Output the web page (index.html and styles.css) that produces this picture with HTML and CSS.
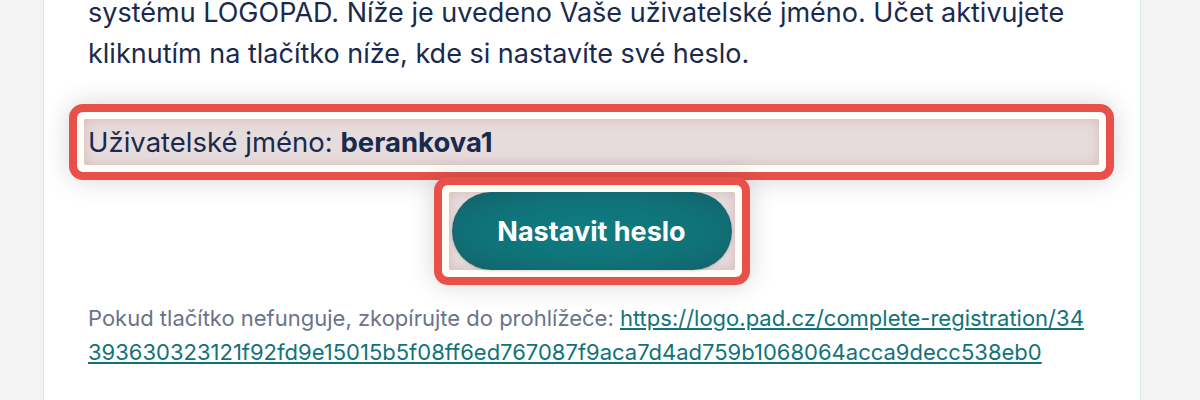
FILE: index.html
```html
<!DOCTYPE html>
<html lang="cs">
<head>
<meta charset="utf-8">
<title>LOGOPAD</title>
<link rel="stylesheet" href="styles.css">
</head>
<body>
<div class="card">
  <p class="intro">systému LOGOPAD. Níže je uvedeno Vaše uživatelské jméno. Účet aktivujete kliknutím na tlačítko níže, kde si nastavíte své heslo.</p>
  <div class="hl hl-user">
    <div class="hl-inner user">Uživatelské jméno: <strong>berankova1</strong></div>
  </div>
  <div class="btn-row">
    <div class="hl hl-btn">
      <div class="hl-inner btn-wrap"><a class="btn" href="#">Nastavit heslo</a></div>
    </div>
  </div>
  <p class="fallback">Pokud tlačítko nefunguje, zkopírujte do prohlížeče: <a class="link" href="#">https://logo.pad.cz/complete-registration/34393630323121f92fd9e15015b5f08ff6ed767087f9aca7d4ad759b1068064acca9decc538eb0</a></p>
</div>
</body>
</html>
```

FILE: styles.css
```css
html, body {
  margin: 0;
  padding: 0;
  background: #f3f3f3;
  font-family: Inter, "Noto Sans", sans-serif;
  height: 400px;
  overflow: hidden;
}

.card {
  margin-left: 43px;
  width: 1007px;
  background: #ffffff;
  border-left: 1px solid #d6e8e5;
  border-right: 1px solid #d6e8e5;
  padding: 0 45px 60px 44px;
  height: 400px;
}

.intro {
  margin: -8px 0 0 0;
  font-size: 27px;
  line-height: 41px;
  color: #1a2a4e;
}

.hl {
  border: 8px solid #e9504a;
  border-radius: 14px;
  background: #fffdf7;
  padding: 7px;
  box-shadow: 0 0 26px rgba(0, 0, 0, 0.17);
}

.hl-inner {
  background: #e6dcdc;
  border-radius: 2px;
  box-shadow: inset 0 0 12px rgba(190, 120, 120, 0.35);
}

.hl-user {
  margin: 30px -19px 0 -19px;
}

.user {
  height: 46px;
  line-height: 46px;
  padding-left: 4px;
  font-size: 27.5px;
  color: #1a2a4e;
}

.user strong {
  font-weight: 700;
}

.btn-row {
  display: flex;
  justify-content: center;
  margin-top: -3px;
  position: relative;
}

.btn-wrap {
  padding: 0 3px;
  display: flex;
}

.btn {
  display: flex;
  align-items: center;
  justify-content: center;
  width: 280px;
  height: 78px;
  border-radius: 39px;
  background: radial-gradient(ellipse at center, #0e7d83 0%, #0f7378 55%, #15616a 100%);
  color: #ffffff;
  font-weight: 700;
  font-size: 27px;
  text-decoration: none;
  box-shadow: 0 1px 3px rgba(0, 0, 0, 0.15);
}

.fallback {
  margin: 16px 0 0 0;
  font-size: 22px;
  line-height: 34px;
  color: #6a7389;
}

.link {
  color: #127378;
  text-decoration: underline;
  word-break: break-all;
}
```
